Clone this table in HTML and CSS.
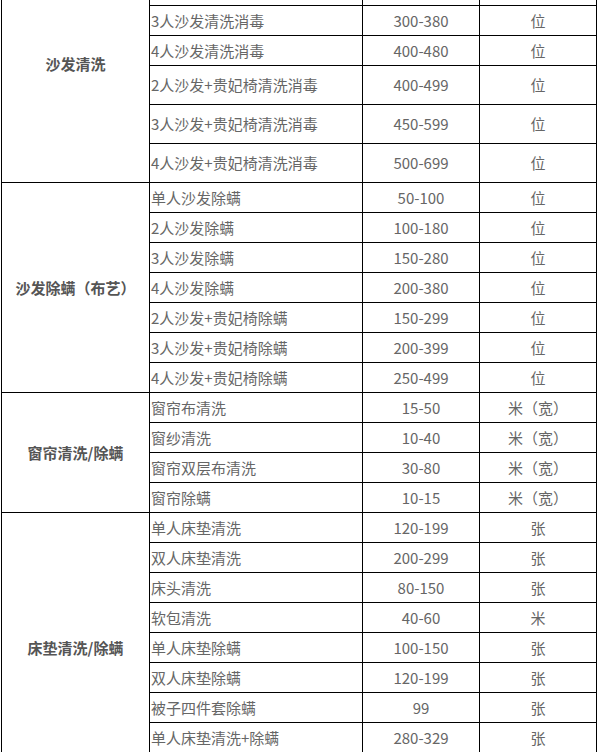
FILE: index.html
```html
<!DOCTYPE html>
<html lang="zh-CN">
<head>
<meta charset="utf-8">
<title>价目表</title>
<link rel="stylesheet" href="styles.css">
</head>
<body>
<div class="sheet">
<table class="price-table">
  <colgroup>
    <col class="c-cat"><col class="c-item"><col class="c-price"><col class="c-unit">
  </colgroup>
  <tbody>
    <tr><td class="cat" rowspan="7">沙发清洗</td><td class="item">单人沙发清洗消毒</td><td class="num">150-200</td><td class="unit">位</td></tr>
    <tr><td class="item">2人沙发清洗消毒</td><td class="num">200-280</td><td class="unit">位</td></tr>
    <tr><td class="item">3人沙发清洗消毒</td><td class="num">300-380</td><td class="unit">位</td></tr>
    <tr><td class="item">4人沙发清洗消毒</td><td class="num">400-480</td><td class="unit">位</td></tr>
    <tr class="tall"><td class="item">2人沙发+贵妃椅清洗消毒</td><td class="num">400-499</td><td class="unit">位</td></tr>
    <tr class="tall"><td class="item">3人沙发+贵妃椅清洗消毒</td><td class="num">450-599</td><td class="unit">位</td></tr>
    <tr class="tall"><td class="item">4人沙发+贵妃椅清洗消毒</td><td class="num">500-699</td><td class="unit">位</td></tr>

    <tr><td class="cat" rowspan="7">沙发除螨（布艺）</td><td class="item">单人沙发除螨</td><td class="num">50-100</td><td class="unit">位</td></tr>
    <tr><td class="item">2人沙发除螨</td><td class="num">100-180</td><td class="unit">位</td></tr>
    <tr><td class="item">3人沙发除螨</td><td class="num">150-280</td><td class="unit">位</td></tr>
    <tr><td class="item">4人沙发除螨</td><td class="num">200-380</td><td class="unit">位</td></tr>
    <tr><td class="item">2人沙发+贵妃椅除螨</td><td class="num">150-299</td><td class="unit">位</td></tr>
    <tr><td class="item">3人沙发+贵妃椅除螨</td><td class="num">200-399</td><td class="unit">位</td></tr>
    <tr><td class="item">4人沙发+贵妃椅除螨</td><td class="num">250-499</td><td class="unit">位</td></tr>

    <tr><td class="cat" rowspan="4">窗帘清洗/除螨</td><td class="item">窗帘布清洗</td><td class="num">15-50</td><td class="unit">米（宽）</td></tr>
    <tr><td class="item">窗纱清洗</td><td class="num">10-40</td><td class="unit">米（宽）</td></tr>
    <tr><td class="item">窗帘双层布清洗</td><td class="num">30-80</td><td class="unit">米（宽）</td></tr>
    <tr><td class="item">窗帘除螨</td><td class="num">10-15</td><td class="unit">米（宽）</td></tr>

    <tr><td class="cat" rowspan="9">床垫清洗/除螨</td><td class="item">单人床垫清洗</td><td class="num">120-199</td><td class="unit">张</td></tr>
    <tr><td class="item">双人床垫清洗</td><td class="num">200-299</td><td class="unit">张</td></tr>
    <tr><td class="item">床头清洗</td><td class="num">80-150</td><td class="unit">张</td></tr>
    <tr><td class="item">软包清洗</td><td class="num">40-60</td><td class="unit">米</td></tr>
    <tr><td class="item">单人床垫除螨</td><td class="num">100-150</td><td class="unit">张</td></tr>
    <tr><td class="item">双人床垫除螨</td><td class="num">120-199</td><td class="unit">张</td></tr>
    <tr><td class="item">被子四件套除螨</td><td class="num">99</td><td class="unit">张</td></tr>
    <tr><td class="item">单人床垫清洗+除螨</td><td class="num">280-329</td><td class="unit">张</td></tr>
    <tr><td class="item">双人床垫清洗+除螨</td><td class="num">350-499</td><td class="unit">张</td></tr>
  </tbody>
</table>
</div>
</body>
</html>
```

FILE: styles.css
```css
html, body {
  margin: 0;
  padding: 0;
  background: #fff;
  overflow: hidden;
}

.sheet {
  padding-left: 1px;
  margin-top: -55px;
}

.price-table {
  border-collapse: collapse;
  table-layout: fixed;
  width: 595px;
  font-family: "Noto Sans CJK SC", "Noto Sans", sans-serif;
  font-size: 15px;
  color: #666;
}

.c-cat { width: 148px; }
.c-item { width: 213px; }
.c-price { width: 117px; }
.c-unit { width: 117px; }

.price-table td {
  border: 1px solid #000;
  padding: 0;
  height: 29px;
  line-height: 20px;
  vertical-align: middle;
  white-space: nowrap;
}

.price-table tr.tall td {
  height: 38px;
}

.price-table td.cat {
  text-align: center;
  font-weight: bold;
  color: #555;
}

.price-table td.item {
  text-align: left;
  padding-left: 1px;
}

.price-table td.num,
.price-table td.unit {
  text-align: center;
}
```
